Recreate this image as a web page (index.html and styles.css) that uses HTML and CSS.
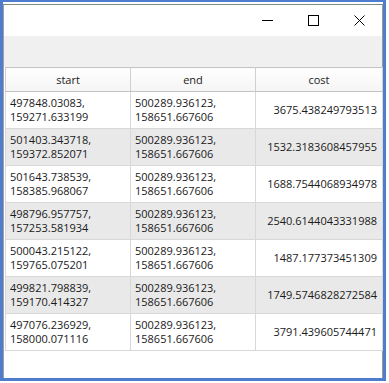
FILE: index.html
```html
<!DOCTYPE html>
<html>
<head>
<meta charset="utf-8">
<link rel="stylesheet" href="styles.css">
</head>
<body>
<div class="frame">
  <div class="window">
    <div class="titlebar">
      <div class="tbtn">
        <svg width="11" height="11" viewBox="0 0 11 11"><line x1="0" y1="5.5" x2="11" y2="5.5" stroke="#000" stroke-width="1"/></svg>
      </div>
      <div class="tbtn">
        <svg width="11" height="11" viewBox="0 0 11 11"><rect x="0.5" y="0.5" width="10" height="10" fill="none" stroke="#000" stroke-width="1"/></svg>
      </div>
      <div class="tbtn">
        <svg width="11" height="11" viewBox="0 0 11 11"><path d="M0.5 0.5 L10.5 10.5 M10.5 0.5 L0.5 10.5" stroke="#000" stroke-width="1"/></svg>
      </div>
    </div>
    <div class="toolbar"></div>
    <div class="content">
      <table class="grid">
        <colgroup><col class="c1"><col class="c2"><col class="c3"></colgroup>
        <thead>
          <tr><th>start</th><th>end</th><th>cost</th></tr>
        </thead>
        <tbody>
          <tr><td>497848.03083,<br>159271.633199</td><td>500289.936123,<br>158651.667606</td><td class="num">3675.438249793513</td></tr>
          <tr class="alt"><td>501403.343718,<br>159372.852071</td><td>500289.936123,<br>158651.667606</td><td class="num">1532.3183608457955</td></tr>
          <tr><td>501643.738539,<br>158385.968067</td><td>500289.936123,<br>158651.667606</td><td class="num">1688.7544068934978</td></tr>
          <tr class="alt"><td>498796.957757,<br>157253.581934</td><td>500289.936123,<br>158651.667606</td><td class="num">2540.6144043331988</td></tr>
          <tr><td>500043.215122,<br>159765.075201</td><td>500289.936123,<br>158651.667606</td><td class="num">1487.177373451309</td></tr>
          <tr class="alt"><td>499821.798839,<br>159170.414327</td><td>500289.936123,<br>158651.667606</td><td class="num">1749.5746828272584</td></tr>
          <tr><td>497076.236929,<br>158000.071116</td><td>500289.936123,<br>158651.667606</td><td class="num">3791.439605744471</td></tr>
        </tbody>
      </table>
    </div>
  </div>
</div>
</body>
</html>
```

FILE: styles.css
```css
html, body {
  margin: 0;
  padding: 0;
  background: #ffffff;
}
body {
  font-family: "Open Sans", "Noto Sans", sans-serif;
  font-size: 11px;
  color: #1a1a1a;
  width: 389px;
  height: 383px;
  overflow: hidden;
}
.frame {
  box-sizing: border-box;
  width: 386px;
  height: 381px;
  border: 3px solid #4d7dcc;
  border-top-width: 2px;
  padding-top: 2px;
  display: flex;
  flex-direction: column;
}
.window {
  flex: 1;
  display: flex;
  flex-direction: column;
  border-top: 1px solid #7d8a7d;
  border-left: 1px solid #a0a0a0;
  border-right: 1px solid #9a9a9a;
  background: #ffffff;
}
.titlebar {
  height: 31px;
  display: flex;
  justify-content: flex-end;
  align-items: center;
  background: #ffffff;
}
.tbtn {
  width: 46px;
  height: 31px;
  display: flex;
  align-items: center;
  justify-content: center;
}
.tbtn svg {
  display: block;
}
.toolbar {
  height: 31px;
  background: #f0f0f0;
}
.content {
  flex: 1;
  padding-left: 1px;
}
.grid {
  border-collapse: collapse;
  table-layout: fixed;
  width: 377px;
}
.c1 { width: 125px; }
.c2 { width: 125px; }
.c3 { width: 127px; }
.grid th {
  height: 23px;
  padding: 0;
  font-weight: normal;
  text-align: center;
  background: linear-gradient(#ffffff, #f4f4f4);
  border: 1px solid #d0d0d0;
  border-top-color: #c4c4c4;
  border-bottom-color: #c4c4c4;
  line-height: 14px;
}
.grid td {
  height: 36px;
  padding: 0 4px;
  border: 1px solid #d8d8d8;
  line-height: 14px;
  vertical-align: middle;
  white-space: nowrap;
  overflow: hidden;
}
.grid td.num {
  text-align: right;
  padding-right: 5px;
}
.grid tr.alt td {
  background: #e9e9e9;
}
```
